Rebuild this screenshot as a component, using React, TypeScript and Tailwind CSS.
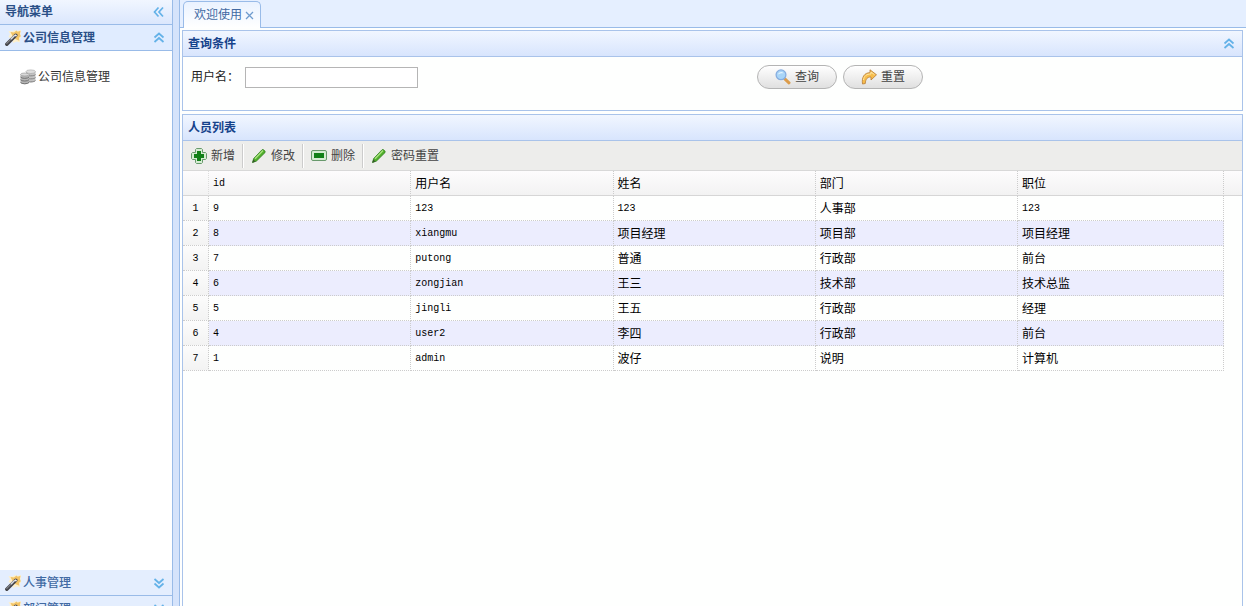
import type { ReactNode } from 'react'

type IconProps = { className?: string }

const people = [
  { id: '9', user: '123', name: '123', dept: '人事部', job: '123' },
  { id: '8', user: 'xiangmu', name: '项目经理', dept: '项目部', job: '项目经理' },
  { id: '7', user: 'putong', name: '普通', dept: '行政部', job: '前台' },
  { id: '6', user: 'zongjian', name: '王三', dept: '技术部', job: '技术总监' },
  { id: '5', user: 'jingli', name: '王五', dept: '行政部', job: '经理' },
  { id: '4', user: 'user2', name: '李四', dept: '行政部', job: '前台' },
  { id: '1', user: 'admin', name: '波仔', dept: '说明', job: '计算机' },
]

const columns = ['id', '用户名', '姓名', '部门', '职位']

function WandIcon() {
  return (
    <svg className="h-4 w-4 shrink-0" viewBox="0 0 16 16" fill="none">
      <path d="M3.500 1l4 .5L9.500 0l2 1L16 0l-.5 4.500.5 3-1.500 1.500.5 3.500-3.500-1L8 13 7 9 3.500 7 5 4z" fill="#fdf0cd" />
      <path d="M5.500 2l3.500.5L11.500.5l1.200 1.200 2.800-.9-.6 3.200.9 2.300-1.800 1.400.3 3-3-1.200L8.500 8z" fill="#f3c466" />
      <path d="M1.800 14.200L10.800 5.200" stroke="#45454a" strokeWidth="3.400" strokeLinecap="round" />
      <path d="M1.800 13.300L6 9.100" stroke="#85878d" strokeWidth="1.200" strokeLinecap="round" />
      <path d="M6 9.100l3.800-3.800" stroke="#d9dbe0" strokeWidth="1.500" />
      <path d="M10 4.700l1.500 1.400" stroke="#f6f6f8" strokeWidth="1.500" />
    </svg>
  )
}

function DatabaseIcon() {
  return (
    <svg className="h-4 w-4 shrink-0" viewBox="0 0 16 16">
      <path d="M6 2.500v9c0 2.500 9.500 2.500 9.500 0v-9z" fill="#c2c2c2" />
      <ellipse cx="10.700" cy="2.700" rx="4.800" ry="1.800" fill="#dedede" stroke="#a2a2a2" strokeWidth=".6" />
      <path d="M6 5.500c1 1.800 8.500 1.800 9.500 0M6 8.500c1 1.800 8.500 1.800 9.500 0M6 11.500c1 1.800 8.500 1.800 9.500 0" fill="none" stroke="#858585" />
      <path d="M.5 5.500v8c0 2.200 8.500 2.200 8.500 0v-8z" fill="#b5b5b5" />
      <ellipse cx="4.800" cy="5.500" rx="4.200" ry="1.500" fill="#d8d8d8" stroke="#8f8f8f" strokeWidth=".6" />
      <path d="M.5 8c1 1.800 7.500 1.800 8.500 0M.5 10.700c1 1.800 7.500 1.800 8.500 0M.5 13.400c1 1.800 7.500 1.800 8.500 0" fill="none" stroke="#737373" />
    </svg>
  )
}

function AddIcon() {
  return (
    <svg className="h-4 w-4 shrink-0" viewBox="0 0 16 16">
      <path d="M5.500.5h5l1 1v3h3l1 1v5l-1 1h-3v3l-1 1h-5l-1-1v-3h-3l-1-1v-5l1-1h3v-3z" fill="#d5ecd2" stroke="#68996c" strokeLinejoin="round" />
      <path d="M6 3h4v3h3v4h-3v3H6v-3H3V6h3z" fill="#128018" />
    </svg>
  )
}

function PencilIcon() {
  return (
    <svg className="h-4 w-4 shrink-0" viewBox="0 0 16 16">
      <path d="M1.500 14.500l1.200-4L11 1.800c1-1 4 1.500 3 2.800L5.500 13z" fill="#4fae2a" stroke="#2d7d1d" strokeWidth=".8" strokeLinejoin="round" />
      <path d="M4 10.800l8-8.300" stroke="#a9e27f" strokeWidth="1.400" />
      <path d="M1.300 14.700l1-3.200 2.300 2z" fill="#365b2a" />
    </svg>
  )
}

function RemoveIcon() {
  return (
    <svg className="h-4 w-4 shrink-0" viewBox="0 0 16 16">
      <rect x=".5" y="2.500" width="15" height="10" rx="1.500" fill="#d5ecd2" stroke="#68996c" />
      <rect x="3" y="5" width="10" height="5" fill="#128018" />
    </svg>
  )
}

function SearchIcon() {
  return (
    <svg className="h-4 w-4 shrink-0" viewBox="0 0 16 16">
      <path d="M9.800 9.800l4.200 4" stroke="#dc9c4b" strokeWidth="3" strokeLinecap="round" />
      <circle cx="6" cy="5.800" r="4.900" fill="#a9d5f7" stroke="#86ade0" strokeWidth="1.300" />
      <path d="M3 5.500C3.500 2.500 7.500 2 9 4.500 7.500 4 5 4.500 3 5.500z" fill="#e3f3ff" />
    </svg>
  )
}

function RedoIcon() {
  return (
    <svg className="h-4 w-4 shrink-0" viewBox="0 0 16 16">
      <path d="M1.500 15C.5 8 3.500 3.700 9 3.700V.8l6.500 5L10 11V8C6.500 7.800 4.500 10 4.300 14.500z" fill="#f7bd4b" stroke="#bd8440" strokeWidth=".9" strokeLinejoin="round" />
      <path d="M2.500 11C3 7 5.500 5 10 5V3l3.500 2.700" fill="none" stroke="#fde6a5" />
    </svg>
  )
}

function Chevrons({ className }: IconProps) {
  return (
    <svg className={className} viewBox="0 0 16 16" fill="none" stroke="#64b2e8" strokeWidth="1.700">
      <path d="M3.500 7.500L8 3.500l4.500 4M3.500 12L8 8l4.500 4" />
    </svg>
  )
}

function AccordionHeader({ title, open }: { title: string; open?: boolean }) {
  return (
    <button
      className={
        open
          ? 'flex h-[26px] w-full shrink-0 items-center border-b border-[#99bbe8] bg-[#e0ecff] px-[5px] font-bold text-[#2a4f87]'
          : 'flex h-[26px] w-full shrink-0 items-center border-b border-[#99bbe8] bg-[#e4eefe] px-[5px] font-medium text-[#416aa3]'
      }
    >
      <WandIcon />
      <span className="ml-[2px] flex-1 text-left">{title}</span>
      <Chevrons className={open ? 'h-4 w-4' : 'h-4 w-4 rotate-180'} />
    </button>
  )
}

function PanelHeader({ title, children }: { title: string; children?: ReactNode }) {
  return (
    <div className="flex h-[26px] shrink-0 items-center justify-between border-b border-[#a9c3ea] bg-linear-to-b from-[#f1f6ff] to-[#d8e5fd] px-[5px]">
      <h2 className="font-bold text-[#15428b]">{title}</h2>
      {children}
    </div>
  )
}

function ToolButton({ icon, label }: { icon: ReactNode; label: string }) {
  return (
    <button className="flex h-6 items-center gap-1 px-[7px] text-[#444]">
      {icon}
      <span>{label}</span>
    </button>
  )
}

function PillButton({ icon, label }: { icon: ReactNode; label: string }) {
  return (
    <button className="flex h-6 w-20 items-center justify-center gap-1 rounded-full border border-[#b4b4b4] bg-linear-to-b from-white to-[#e0e0e0] text-[#444]">
      {icon}
      <span>{label}</span>
    </button>
  )
}

// latin values use the narrow half-width face
function CellText({ text }: { text: string }) {
  const latin = /^[\x20-\x7e]+$/.test(text)
  return <div className={latin ? "font-['Liberation_Mono',monospace] text-[10px] leading-4" : 'leading-4'}>{text}</div>
}

function Sidebar() {
  return (
    <aside className="flex w-[173px] shrink-0 flex-col border-r border-[#99bbe8] bg-white">
      <div className="flex h-[25px] shrink-0 items-center justify-between border-b border-[#99bbe8] bg-linear-to-b from-[#f1f6ff] to-[#dbe7fd] px-[5px]">
        <h2 className="font-bold text-[#2a4f87]">导航菜单</h2>
        <button aria-label="收起导航">
          <Chevrons className="h-4 w-4 -rotate-90" />
        </button>
      </div>
      <AccordionHeader title="公司信息管理" open />
      <nav className="flex-1 px-5 pt-[18px]">
        <a href="#company" className="flex items-center gap-[2px] text-[#333]">
          <DatabaseIcon />
          公司信息管理
        </a>
      </nav>
      <AccordionHeader title="人事管理" />
      <AccordionHeader title="部门管理" />
    </aside>
  )
}

function PeopleTable() {
  return (
    <table className="w-full table-fixed border-separate border-spacing-0 text-left text-black">
      <colgroup>
        <col className="w-[26px]" />
        <col className="w-[19.1%]" />
        <col className="w-[19.1%]" />
        <col className="w-[19.1%]" />
        <col className="w-[19.1%]" />
        <col />
        <col className="w-[18px]" />
      </colgroup>
      <thead className="bg-linear-to-b from-[#fdfcfd] to-[#f2f2f2]">
        <tr>
          <td className="h-[25px] border-r border-b border-r-[#ddd] border-b-[#d6d6d6] [border-right-style:dotted]" />
          {columns.map(c => (
            <th key={c} className="border-r border-b border-r-[#ccc] border-b-[#d6d6d6] px-1 pt-[2px] font-normal [border-right-style:dotted]">
              <CellText text={c} />
            </th>
          ))}
          <td className="border-b border-[#d6d6d6]" />
        </tr>
      </thead>
      <tbody>
        {people.map((p, i) => (
          <tr key={p.id}>
            <td className="h-[25px] border-r border-b border-dotted border-[#ccc] bg-linear-to-b from-[#fcfcfc] to-[#f3f3f3] pt-[2px] text-center">
              <CellText text={String(i + 1)} />
            </td>
            {[p.id, p.user, p.name, p.dept, p.job].map((value, col) => (
              <td
                key={columns[col]}
                className={
                  i % 2
                    ? 'border-r border-b border-dotted border-[#ccc] bg-[#ecedfe] px-1 pt-[2px]'
                    : 'border-r border-b border-dotted border-[#ccc] px-1 pt-[2px]'
                }
              >
                <CellText text={value} />
              </td>
            ))}
            <td />
          </tr>
        ))}
      </tbody>
    </table>
  )
}

function Separator() {
  return <div className="h-6 border-r border-l border-r-white border-l-[#ccc]" />
}

export default function App() {
  return (
    <div className="h-screen overflow-hidden bg-[#d5e3fb] font-['Liberation_Sans','Noto_Sans_CJK_SC',sans-serif] text-xs">
      {/* the accordion runs a little past the bottom of the window */}
      <div className="flex h-[calc(100vh+16px)]">
        <Sidebar />
        <main className="ml-[6px] flex min-w-0 flex-1 flex-col border-l border-[#99bbe8] bg-[#fefffe]">
          <div className="flex h-7 shrink-0 items-end border-b border-[#99bbe8] bg-[#e5efff] pl-[3px]">
            <div className="-mb-px flex h-[27px] items-center gap-[3px] rounded-t-[5px] border border-b-0 border-[#99bbe8] bg-linear-to-b from-[#eaf2ff] to-white pr-[6px] pl-[10px] text-[#416aa3]">
              <span>欢迎使用</span>
              <button aria-label="关闭">
                <svg className="h-[9px] w-[9px]" viewBox="0 0 9 9" stroke="#6f9cce" strokeWidth="1.300">
                  <path d="M1 1l7 7M8 1L1 8" />
                </svg>
              </button>
            </div>
          </div>
          <div className="flex min-h-0 flex-1 flex-col gap-[3px] pt-[2px] pr-[3px] pl-[2px]">
            <section className="shrink-0 border border-[#a9c3ea]">
              <PanelHeader title="查询条件">
                <button aria-label="折叠">
                  <Chevrons className="h-4 w-4" />
                </button>
              </PanelHeader>
              <form className="flex h-[53px] items-start px-2 pt-2">
                <div className="flex h-6 w-[566px] items-center">
                  <label htmlFor="username" className="w-[54px] text-[#222]">
                    用户名：
                  </label>
                  <input id="username" type="text" className="h-[21px] w-[173px] border border-[#b5b5b5] bg-white px-1 outline-none" />
                </div>
                <div className="flex gap-[6px]">
                  <PillButton icon={<SearchIcon />} label="查询" />
                  <PillButton icon={<RedoIcon />} label="重置" />
                </div>
              </form>
            </section>
            <section className="min-h-0 flex-1 border border-[#a9c3ea]">
              <PanelHeader title="人员列表" />
              <div className="flex h-[30px] items-center border-b border-[#d8d8d8] bg-[#ededeb] pl-px">
                <ToolButton icon={<AddIcon />} label="新增" />
                <Separator />
                <ToolButton icon={<PencilIcon />} label="修改" />
                <Separator />
                <ToolButton icon={<RemoveIcon />} label="删除" />
                <Separator />
                <ToolButton icon={<PencilIcon />} label="密码重置" />
              </div>
              <PeopleTable />
            </section>
          </div>
        </main>
      </div>
    </div>
  )
}
